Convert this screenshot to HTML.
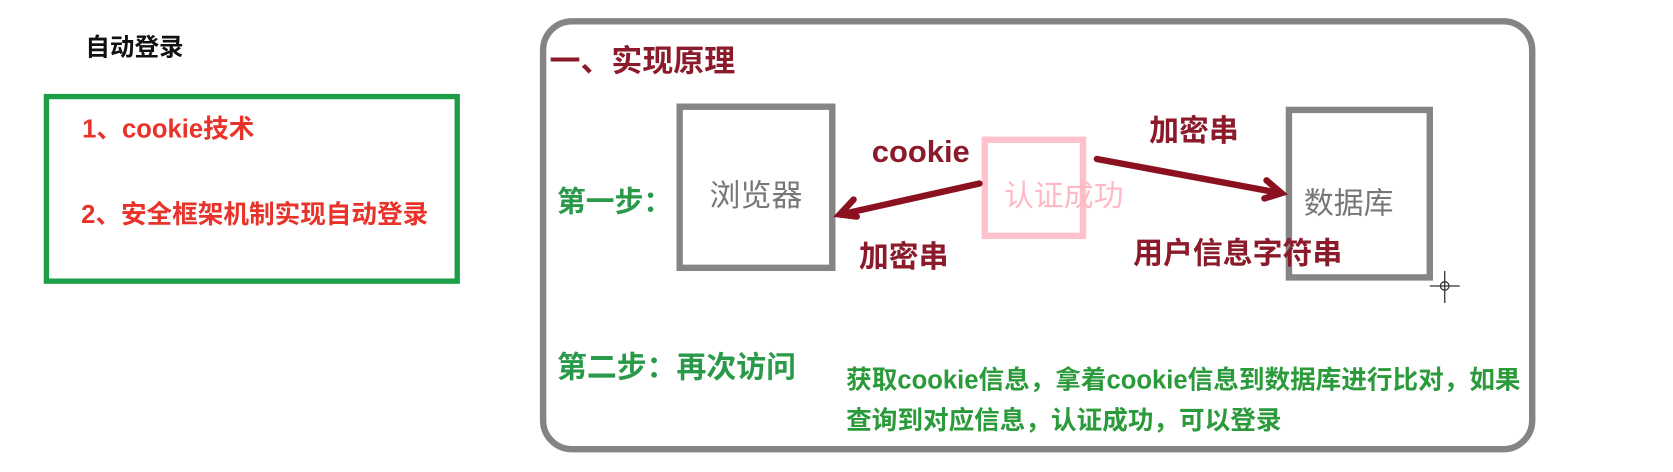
<!DOCTYPE html>
<html><head><meta charset="utf-8"><style>
body{margin:0;width:1673px;height:471px;background:#fff;position:relative;overflow:hidden;font-family:"Liberation Sans","Noto Sans CJK SC",sans-serif;}
#w{position:absolute;left:0;top:0;width:1568px;height:442px;transform:scale(1.067);transform-origin:0 0;}
.a{position:absolute;white-space:nowrap;line-height:1;}
.b{font-weight:bold;}
</style></head><body><div id="w">
<div class="a b" style="left:80px;top:33px;font-size:23px;color:#111">自动登录</div>
<div style="position:absolute;left:41px;top:88px;width:380px;height:168px;border:5px solid #1b9e45"></div>
<div class="a b" style="left:77px;top:110px;font-size:24px;color:#e8332a">1、cookie技术</div>
<div class="a b" style="left:76px;top:190px;font-size:24px;color:#e8332a">2、安全框架机制实现自动登录</div>

<div style="position:absolute;left:506px;top:17px;width:921px;height:395px;border:6px solid #848484;border-radius:30px"></div>
<div class="a b" style="left:515px;top:44px;font-size:29px;color:#8b1a2a">一、实现原理</div>
<div style="position:absolute;left:634px;top:97px;width:137px;height:145px;border:6px solid #858585"></div>
<div class="a" style="left:665px;top:170px;font-size:29px;color:#777">浏览器</div>
<div class="a b" style="left:522px;top:176px;font-size:27px;color:#2a9a4a">第一步：</div>
<div class="a b" style="left:817px;top:129px;font-size:29px;color:#8b1a2a">cookie</div>
<div style="position:absolute;left:920px;top:128px;width:86px;height:84px;border:6px solid #ffc2cc"></div>
<div class="a" style="left:941px;top:170px;font-size:28px;color:#ffb8c4">认证成功</div>
<div class="a b" style="left:805px;top:227px;font-size:28px;color:#8b1a2a">加密串</div>
<div class="a b" style="left:1077px;top:109px;font-size:28px;color:#8b1a2a">加密串</div>
<div style="position:absolute;left:1205px;top:100px;width:126px;height:151px;border:6px solid #858585"></div>
<div class="a" style="left:1222px;top:177px;font-size:28px;color:#777">数据库</div>
<div class="a b" style="left:1062px;top:224px;font-size:28px;color:#8b1a2a">用户信息字符串</div>
<svg style="position:absolute;left:0;top:0" width="1568" height="442">
<g stroke="#8b1020" stroke-width="6" stroke-linecap="round" fill="none">
<line x1="918" y1="172" x2="788" y2="201"/>
<polyline points="800,187 787,201 803,203"/>
<line x1="1028" y1="149" x2="1200" y2="181"/>
<polyline points="1187,169 1201,181 1185,186"/>
</g>
<g stroke="#333" stroke-width="1.2" fill="none">
<line x1="1340" y1="268" x2="1368" y2="268"/><line x1="1354" y1="254" x2="1354" y2="284"/>
<circle cx="1354" cy="268" r="4"/>
</g>
</svg>
<div class="a b" style="left:522px;top:331px;font-size:28px;color:#2a9a4a">第二步：再次访问</div>
<div class="a b" style="left:793px;top:345px;font-size:24px;color:#2a9a3a">获取cookie信息，拿着cookie信息到数据库进行比对，如果</div>
<div class="a b" style="left:793px;top:383px;font-size:24px;color:#2a9a3a">查询到对应信息，认证成功，可以登录</div>
</div></body></html>
